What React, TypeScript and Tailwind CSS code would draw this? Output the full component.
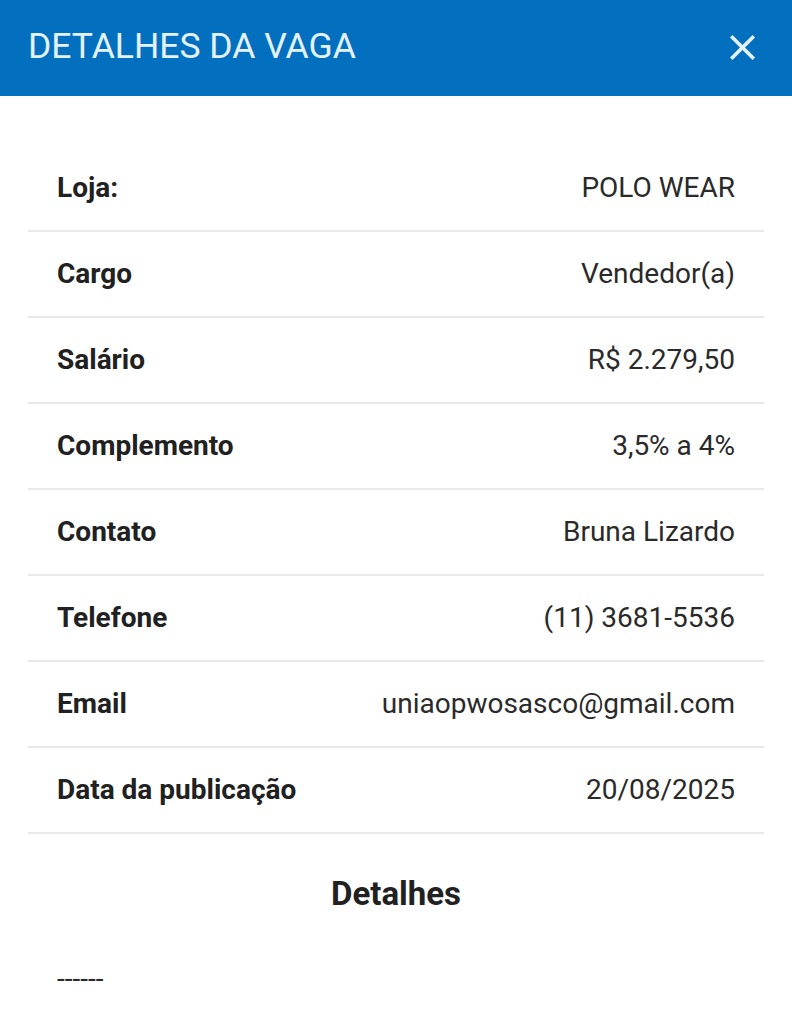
import React from 'react';

// Job details modal - header bar + key/value list
const ROWS: { label: string; value: string }[] = [
  { label: 'Loja:', value: 'POLO WEAR' },
  { label: 'Cargo', value: 'Vendedor(a)' },
  { label: 'Salário', value: 'R$ 2.279,50' },
  { label: 'Complemento', value: '3,5% a 4%' },
  { label: 'Contato', value: 'Bruna Lizardo' },
  { label: 'Telefone', value: '(11) 3681-5536' },
  { label: 'Email', value: 'uniaopwosasco@gmail.com' },
  { label: 'Data da publicação', value: '20/08/2025' },
];

const CloseIcon: React.FC = () => (
  <svg viewBox="0 0 24 24" className="w-[43px] h-[43px]" fill="#e3f2fd">
    <path d="M19 6.41L17.59 5 12 10.59 6.41 5 5 6.41 10.59 12 5 17.59 6.41 19 12 13.41 17.59 19 19 17.59 13.41 12z" />
  </svg>
);

export default function App() {
  return (
    <div className="w-[792px] min-h-[1024px] bg-white font-['Roboto',sans-serif]">
      {/* Header */}
      <div className="h-[96px] bg-[#0370bf] flex items-center justify-between px-[28px] pb-[2px]">
        <h1 className="text-[35.5px] font-normal text-[#e3f2fd] leading-none">DETALHES DA VAGA</h1>
        <button className="flex items-center justify-center">
          <CloseIcon />
        </button>
      </div>

      {/* Content */}
      <div className="px-[28px] pt-[50px]">
        {ROWS.map((row) => (
          <div
            key={row.label}
            className="h-[86px] flex items-center justify-between px-[29px] border-b-2 border-[#e8e8e8]"
          >
            <span className="text-[28px] font-bold text-[#212121]">{row.label}</span>
            <span className="text-[28px] font-normal text-[#2a2a2a]">{row.value}</span>
          </div>
        ))}

        <h2 className="mt-[42px] text-center text-[33px] font-bold leading-[36px] text-[#212121]">Detalhes</h2>

        <p className="mt-[51px] px-[29px] text-[28px] leading-[32px] text-[#2a2a2a]">------</p>
      </div>
    </div>
  );
}
